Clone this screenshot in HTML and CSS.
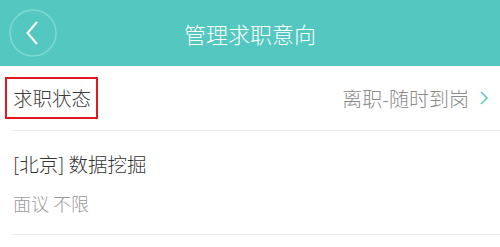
FILE: index.html
```html
<!DOCTYPE html>
<html lang="zh">
<head>
<meta charset="utf-8">
<link rel="stylesheet" href="styles.css">
</head>
<body>
<header class="topbar">
  <div class="back">
    <svg width="48" height="48" viewBox="0 0 48 48">
      <circle cx="24" cy="24" r="23" fill="none" stroke="#7fd8d1" stroke-width="1.5"/>
      <polyline points="28,13 18.5,24 28,35" fill="none" stroke="#ffffff" stroke-width="2"/>
    </svg>
  </div>
  <h1 class="title">管理求职意向</h1>
  <div class="spacer"></div>
</header>
<section class="row status">
  <span class="label">求职状态</span>
  <span class="value">离职-随时到岗</span>
  <svg class="arrow" width="10" height="14" viewBox="0 0 10 14">
    <polyline points="2,1 8,7 2,13" fill="none" stroke="#5ccbc3" stroke-width="1.6"/>
  </svg>
</section>
<section class="row intent">
  <div class="job">[北京] 数据挖掘</div>
  <div class="meta">面议 不限</div>
</section>
</body>
</html>
```
FILE: styles.css
```css
html, body {
  margin: 0;
  padding: 0;
  background: #ffffff;
  font-family: "Noto Sans CJK SC", "Noto Sans", sans-serif;
  font-weight: 300;
}
.topbar {
  height: 66px;
  background: #54c8c0;
  display: flex;
  align-items: center;
}
.back {
  width: 48px;
  height: 48px;
  margin-left: 9px;
}
.back svg { display: block; }
.spacer {
  width: 57px;
}
.title {
  flex: 1;
  margin: 0;
  text-align: center;
  color: #ffffff;
  font-size: 22px;
  font-weight: 300;
  line-height: 66px;
}
.row {
  margin-left: 12px;
  border-bottom: 1px solid #ececec;
}
.status {
  height: 64px;
  display: flex;
  align-items: center;
}
.label {
  margin-left: -7px;
  border: 2px solid #e5161d;
  padding: 0 5px 0 6px;
  height: 38px;
  line-height: 38px;
  font-size: 19.5px;
  color: #3a3a3a;
}
.value {
  margin-left: auto;
  font-size: 20px;
  color: #8a8a8a;
}
.arrow {
  margin: 0 11px 0 10px;
}
.intent {
  height: 104px;
  padding-left: 1px;
  box-sizing: border-box;
  padding-top: 19px;
}
.job {
  font-size: 19.5px;
  line-height: 28px;
  color: #333333;
}
.meta {
  margin-top: 12px;
  font-size: 18px;
  line-height: 26px;
  color: #9a9a9a;
}
```
